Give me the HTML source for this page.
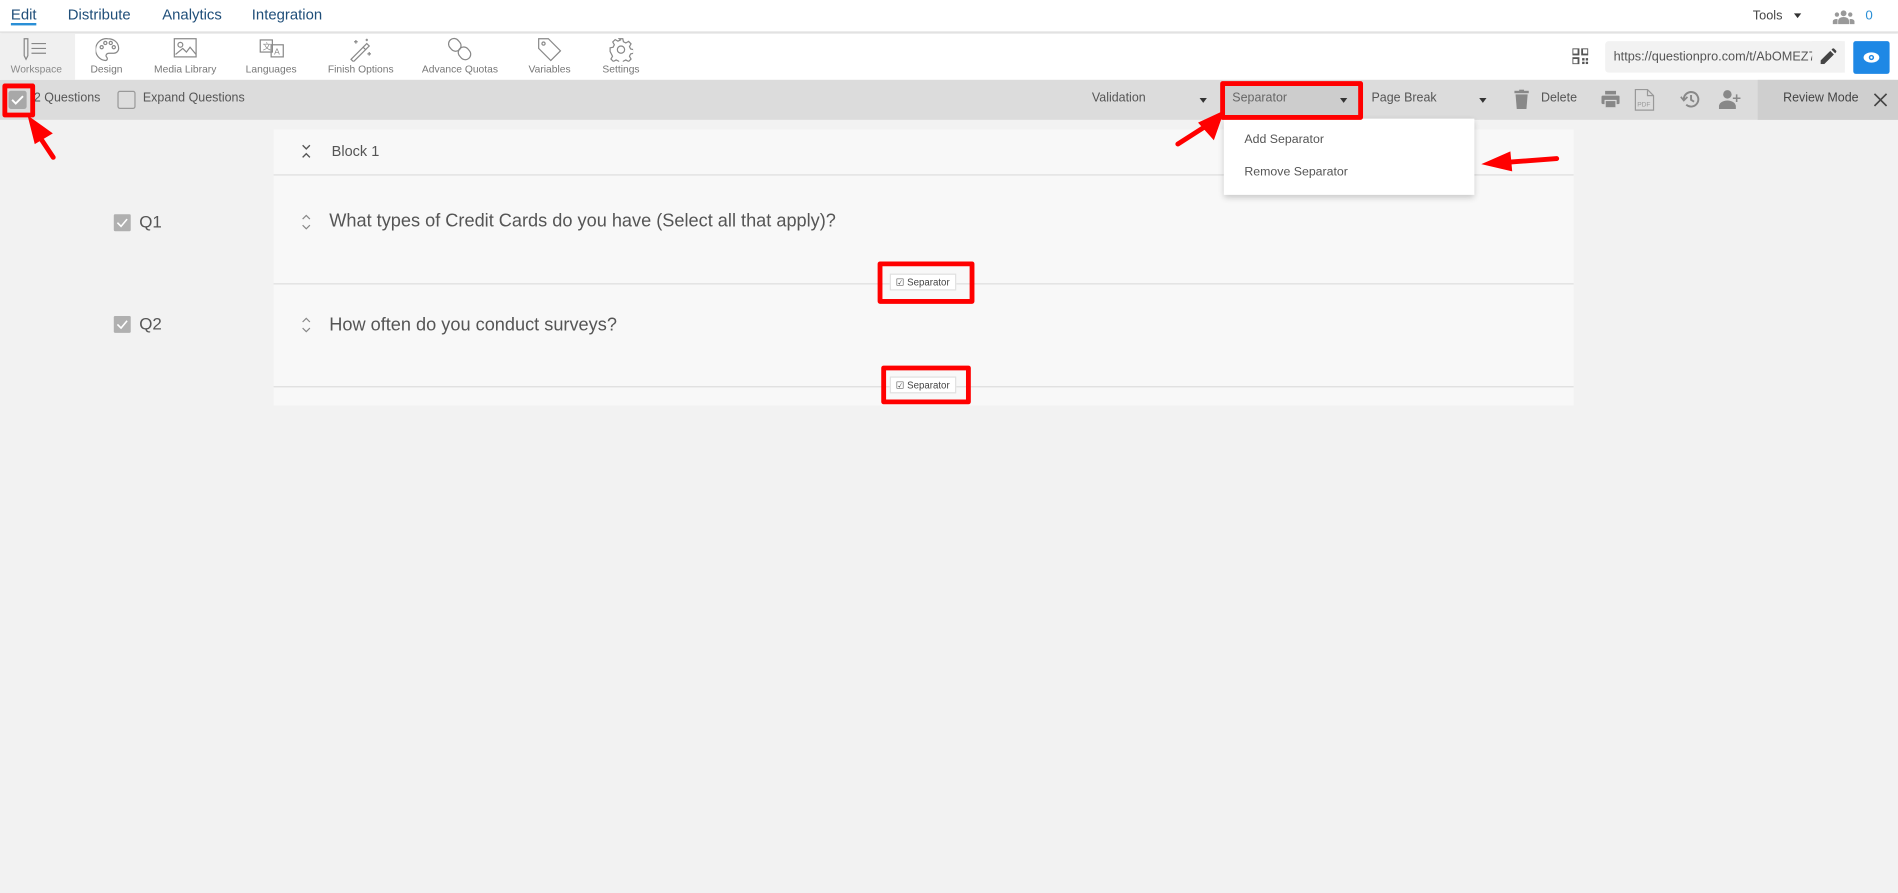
<!DOCTYPE html>
<html><head><meta charset="utf-8"><style>
*{box-sizing:border-box;margin:0;padding:0}
html,body{width:1898px;height:893px;overflow:hidden;background:#f2f2f2}
#s{position:absolute;left:0;top:0;width:1568px;height:738px;transform:scale(1.2105);transform-origin:0 0;font-family:"Liberation Sans Narrow","Liberation Sans",sans-serif;color:#555}
.a{position:absolute}
.nav{font-size:12.3px;color:#1f4e79;top:5px}
.tb{font-size:8.5px;color:#777;top:52px;text-align:center;width:80px}
.ic{position:absolute;top:31px}
.gb{font-size:10.3px;color:#555;top:76px}
.q{font-size:15px;color:#555}
.sep{position:absolute;background:#fff;border:1px solid #e0e0e0;font-size:8px;color:#444;padding:2px 4px;height:14px;line-height:9px}
.red{position:absolute;border:4px solid #f00;border-radius:2px}
</style></head><body><div id="s">
<div class="a" style="left:0;top:0;width:1568px;height:27px;background:#fff;border-bottom:1px solid #ddd"></div>
<div class="a nav" style="left:9px;border-bottom:2px solid #2a8fd6;height:16px">Edit</div>
<div class="a nav" style="left:56px">Distribute</div>
<div class="a nav" style="left:134px">Analytics</div>
<div class="a nav" style="left:208px">Integration</div>
<div class="a" style="left:1448px;top:7px;font-size:10.5px;color:#444">Tools</div>
<div class="a" style="left:1482px;top:11px;border-left:3.5px solid transparent;border-right:3.5px solid transparent;border-top:4px solid #333"></div>
<svg class="a" style="left:1514px;top:8px" width="18" height="12" viewBox="0 0 18 12"><g fill="#999"><circle cx="9" cy="3" r="2.4"/><circle cx="3.5" cy="4" r="1.8"/><circle cx="14.5" cy="4" r="1.8"/><path d="M4.5 12v-3a4.5 3 0 0 1 9 0v3z"/><path d="M0 12v-2.5a3 2 0 0 1 4-1.7V12z M18 12v-2.5a3 2 0 0 0-4-1.7V12z"/></g></svg>
<div class="a" style="left:1541px;top:7px;font-size:11px;color:#2a8fd6">0</div>
<div class="a" style="left:0;top:28px;width:1568px;height:38px;background:#fff;box-shadow:0 1px 3px rgba(0,0,0,.15)"></div>
<div class="a" style="left:0;top:28px;width:62px;height:38px;background:#f0f0f0"></div>
<svg class="ic" style="left:18px" width="22" height="20" viewBox="0 0 22 20" fill="none" stroke="#888" stroke-width="1"><path d="M2 1h3v14l-1.5 3-1.5-3z"/><path d="M8 5h12M8 9h12M8 13h12"/></svg>
<svg class="ic" style="left:79px" width="20" height="20" viewBox="0 0 20 20" fill="none" stroke="#888" stroke-width="1"><path d="M10 1a9 9 0 0 0-2 18c2 0 2-2 1-3s0-3 2-3h4a4 4 0 0 0 4-4c0-5-4-8-9-8z"/><circle cx="5" cy="8" r="1.3"/><circle cx="8" cy="4.5" r="1.3"/><circle cx="12.5" cy="4.5" r="1.3"/><circle cx="15" cy="8" r="1.3"/></svg>
<svg class="ic" style="left:143px" width="20" height="18" viewBox="0 0 20 18" fill="none" stroke="#888" stroke-width="1"><rect x="1" y="1" width="18" height="15"/><circle cx="6" cy="6" r="2"/><path d="M2 14l6-5 3 3 3-4 5 6"/></svg>
<svg class="ic" style="left:214px" width="22" height="18" viewBox="0 0 22 18" fill="none" stroke="#888" stroke-width="1"><rect x="1" y="2" width="10" height="10"/><rect x="10" y="6" width="10" height="10"/><text x="3" y="10" font-size="7" fill="#888" stroke="none">文</text><text x="12.5" y="14" font-size="7" fill="#888" stroke="none">A</text></svg>
<svg class="ic" style="left:288px" width="20" height="20" viewBox="0 0 20 20" fill="none" stroke="#888" stroke-width="1"><path d="M2 18l10-10 2 2-10 10z"/><path d="M12 8l3-3 2 2-3 3"/><path d="M6 2v3M4.5 3.5h3M17 12v3M15.5 13.5h3M15 1v2M14 2h2"/></svg>
<svg class="ic" style="left:370px" width="20" height="20" viewBox="0 0 20 20" fill="none" stroke="#888" stroke-width="1"><rect x="1" y="1" width="9" height="11" rx="4.5" transform="rotate(-40 5 6)"/><rect x="9" y="8" width="9" height="11" rx="4.5" transform="rotate(-40 13 13)"/></svg>
<svg class="ic" style="left:444px" width="20" height="20" viewBox="0 0 20 20" fill="none" stroke="#888" stroke-width="1"><path d="M1 1h8l10 10-8 8L1 9z"/><circle cx="5" cy="5" r="1.3"/></svg>
<svg class="ic" style="left:503px" width="20" height="20" viewBox="0 0 20 20" fill="none" stroke="#888" stroke-width="1"><circle cx="10" cy="10" r="3"/><path d="M8.5 1h3l.5 2.5 2 1 2.3-1.3 2 2-1.3 2.3 1 2 2.5.5v3l-2.5.5-1 2 1.3 2.3-2 2-2.3-1.3-2 1-.5 2.5h-3l-.5-2.5-2-1-2.3 1.3-2-2 1.3-2.3-1-2L1 11.5v-3l2.5-.5 1-2-1.3-2.3 2-2 2.3 1.3 2-1z"/></svg>
<div class="a tb" style="left:-10px;color:#888">Workspace</div>
<div class="a tb" style="left:48px">Design</div>
<div class="a tb" style="left:113px">Media Library</div>
<div class="a tb" style="left:184px">Languages</div>
<div class="a tb" style="left:258px">Finish Options</div>
<div class="a tb" style="left:340px">Advance Quotas</div>
<div class="a tb" style="left:414px">Variables</div>
<div class="a tb" style="left:473px">Settings</div>
<svg class="a" style="left:1299px;top:40px" width="13" height="13" viewBox="0 0 13 13" fill="#555"><rect x="0" y="0" width="5" height="5" fill="none" stroke="#555" stroke-width="1.5"/><rect x="8" y="0" width="5" height="5" fill="none" stroke="#555" stroke-width="1.5"/><rect x="0" y="8" width="5" height="5" fill="none" stroke="#555" stroke-width="1.5"/><rect x="8" y="8" width="2" height="2"/><rect x="11" y="11" width="2" height="2"/><rect x="11" y="8" width="2" height="2"/><rect x="8" y="11" width="2" height="2"/></svg>
<div class="a" style="left:1326px;top:34px;width:198px;height:26px;background:#f2f2f2;border-radius:3px;font-size:10.5px;color:#555;padding:7px 7px;white-space:nowrap;overflow:hidden">https://questionpro.com/t/AbOMEZ7</div>
<div class="a" style="left:1497px;top:34px;width:27px;height:26px;background:#f2f2f2"></div>
<svg class="a" style="left:1504px;top:40px" width="13" height="13" viewBox="0 0 13 13" fill="#444"><path d="M0 13v-3l8-8 3 3-8 8zM9 1l1.5-1.5 3 3L12 4z"/></svg>
<div class="a" style="left:1531px;top:34px;width:30px;height:27px;background:#1e88e5;border-radius:2px"></div>
<svg class="a" style="left:1539px;top:43px" width="14" height="9" viewBox="0 0 14 9"><ellipse cx="7" cy="4.5" rx="6.5" ry="4.2" fill="#fff"/><circle cx="7" cy="4.5" r="2.2" fill="#1e88e5"/><circle cx="7" cy="4.5" r="1" fill="#fff"/></svg>
<div class="a" style="left:0;top:66px;width:1568px;height:33px;background:#dcdcdc"></div>
<div class="a" style="left:1452px;top:66px;width:116px;height:33px;background:#cfcfcf"></div>
<div class="a" style="left:7px;top:75px;width:15px;height:15px;background:#a8a8a8;border-radius:2px"></div>
<svg class="a" style="left:9px;top:78px" width="11" height="9" viewBox="0 0 11 9" fill="none" stroke="#fff" stroke-width="1.6"><path d="M1 4.5l3 3 6-6"/></svg>
<div class="a gb" style="left:28px">2 Questions</div>
<div class="a" style="left:97px;top:75px;width:15px;height:15px;border:1px solid #999;border-radius:2px;background:#ddd"></div>
<div class="a gb" style="left:118px">Expand Questions</div>
<div class="a gb" style="left:902px">Validation</div>
<div class="a" style="left:991px;top:81px;border-left:3.5px solid transparent;border-right:3.5px solid transparent;border-top:4px solid #333"></div>
<div class="a" style="left:1011px;top:70px;width:112px;height:26px;background:#cdcdcd"></div>
<div class="a gb" style="left:1018px;color:#666">Separator</div>
<div class="a" style="left:1107px;top:81px;border-left:3.5px solid transparent;border-right:3.5px solid transparent;border-top:4px solid #333"></div>
<div class="a gb" style="left:1133px">Page Break</div>
<div class="a" style="left:1222px;top:81px;border-left:3.5px solid transparent;border-right:3.5px solid transparent;border-top:4px solid #333"></div>
<svg class="a" style="left:1251px;top:74px" width="12" height="16" viewBox="0 0 12 16" fill="#888"><rect x="0" y="1" width="12" height="2"/><rect x="4" y="0" width="4" height="2"/><path d="M1 4h10l-1 12H2z"/></svg>
<div class="a gb" style="left:1273px">Delete</div>
<svg class="a" style="left:1323px;top:75px" width="15" height="14" viewBox="0 0 15 14" fill="#888"><rect x="3" y="0" width="9" height="3"/><rect x="0" y="4" width="15" height="7" rx="1"/><rect x="3" y="8" width="9" height="6" fill="#888" stroke="#dcdcdc"/></svg>
<svg class="a" style="left:1350px;top:73px" width="17" height="19" viewBox="0 0 17 19" fill="none" stroke="#999" stroke-width="1"><path d="M1 1h10l5 5v12H1z"/><path d="M11 1v5h5"/><text x="2.5" y="15" font-size="5.5" fill="#999" stroke="none" font-family="Liberation Sans">PDF</text></svg>
<svg class="a" style="left:1388px;top:74px" width="17" height="16" viewBox="0 0 17 16" fill="none" stroke="#888" stroke-width="1.6"><path d="M3 8a6 6 0 1 1 2 4.5"/><path d="M0.5 6l2.5 3 3-3" stroke-width="1.4"/><path d="M9 4.5v4l2.5 1.5"/></svg>
<svg class="a" style="left:1420px;top:74px" width="19" height="16" viewBox="0 0 19 16" fill="#888"><circle cx="7" cy="4" r="3.5"/><path d="M0 16v-2a7 5 0 0 1 14 0v2z"/><path d="M14 4h1.3v2.5h2.5v1.3h-2.5v2.5H14V7.8h-2.5V6.5H14z"/></svg>
<div class="a gb" style="left:1473px;color:#444">Review Mode</div>
<svg class="a" style="left:1548px;top:77px" width="11" height="11" viewBox="0 0 11 11" stroke="#444" stroke-width="1.4"><path d="M0.5 0.5l10 10M10.5 0.5l-10 10"/></svg>
<div class="a" style="left:226px;top:107px;width:1074px;height:228px;background:#f8f8f8"></div>
<div class="a" style="left:226px;top:144px;width:1074px;height:1px;background:#ddd"></div>
<div class="a" style="left:226px;top:234px;width:1074px;height:1px;background:#ddd"></div>
<div class="a" style="left:226px;top:319px;width:1074px;height:1px;background:#ddd"></div>
<svg class="a" style="left:249px;top:119px" width="8" height="12" viewBox="0 0 8 12" fill="none" stroke="#555" stroke-width="1.1"><path d="M1 1l3 3 3-3M1 11l3-3 3 3"/></svg>
<div class="a" style="left:274px;top:118px;font-size:12px;color:#555">Block 1</div>
<svg class="a" style="left:249px;top:177px" width="8" height="13" viewBox="0 0 8 13" fill="none" stroke="#888" stroke-width="1"><path d="M1 4l3-3 3 3M1 9l3 3 3-3"/></svg>
<svg class="a" style="left:249px;top:262px" width="8" height="13" viewBox="0 0 8 13" fill="none" stroke="#888" stroke-width="1"><path d="M1 4l3-3 3 3M1 9l3 3 3-3"/></svg>
<div class="a q" style="left:272px;top:174px">What types of Credit Cards do you have (Select all that apply)?</div>
<div class="a q" style="left:272px;top:260px">How often do you conduct surveys?</div>
<div class="a" style="left:94px;top:177px;width:14px;height:14px;background:#b0b0b0;border-radius:1px"></div>
<svg class="a" style="left:96px;top:180px" width="10" height="8" viewBox="0 0 10 8" fill="none" stroke="#fff" stroke-width="1.3"><path d="M1 4l3 3 5-6"/></svg>
<div class="a" style="left:115px;top:175px;font-size:14px;color:#555">Q1</div>
<div class="a" style="left:94px;top:261px;width:14px;height:14px;background:#b0b0b0;border-radius:1px"></div>
<svg class="a" style="left:96px;top:264px" width="10" height="8" viewBox="0 0 10 8" fill="none" stroke="#fff" stroke-width="1.3"><path d="M1 4l3 3 5-6"/></svg>
<div class="a" style="left:115px;top:259px;font-size:14px;color:#555">Q2</div>
<div class="sep" style="left:735px;top:226px">&#9745; Separator</div>
<div class="sep" style="left:735px;top:311px">&#9745; Separator</div>
<div class="a" style="left:1011px;top:98px;width:207px;height:63px;background:#fff;box-shadow:0 2px 5px rgba(0,0,0,.2)"></div>
<div class="a" style="left:1028px;top:110px;font-size:10.2px;color:#555">Add Separator</div>
<div class="a" style="left:1028px;top:137px;font-size:10.2px;color:#555">Remove Separator</div>
<div class="red" style="left:2px;top:69px;width:27px;height:28px"></div>
<div class="red" style="left:1008px;top:67px;width:118px;height:32px"></div>
<div class="red" style="left:725px;top:216px;width:80px;height:35px"></div>
<div class="red" style="left:728px;top:302px;width:74px;height:32px"></div>
<svg class="a" style="left:0;top:0" width="1568" height="738" viewBox="0 0 1568 738">
<g stroke="#f00" stroke-width="4" stroke-linecap="round" fill="#f00">
<path d="M44 130L32 112" fill="none"/><path d="M26 100l14 10-10 6z"/>
<path d="M973 119l25-16" fill="none"/><path d="M1008 95l-6 17-9-10z"/>
<path d="M1286 131l-40 3" fill="none"/><path d="M1230 135l16-7 1 11z"/>
</g></svg>
</div></body></html>
